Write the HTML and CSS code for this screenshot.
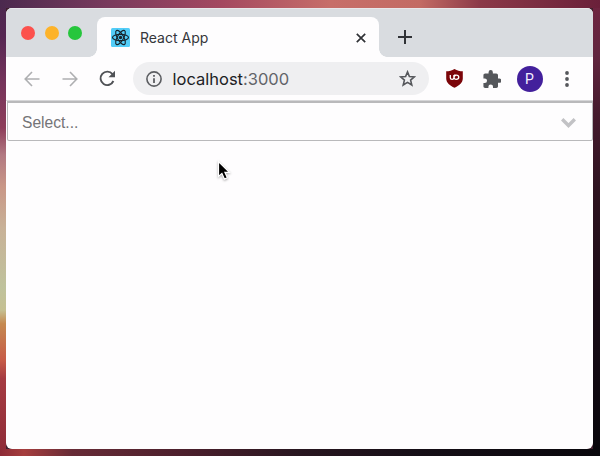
FILE: index.html
```
<!DOCTYPE html>
<html lang="en">
<head>
<meta charset="utf-8">
<title>React App</title>
<link rel="stylesheet" href="styles.css">
</head>
<body>
<div class="desktop">
  <div class="window">
    <div class="tabbar">
      <div class="lights"><i class="light red"></i><i class="light yellow"></i><i class="light green"></i></div>
      <div class="tab">
        <svg class="favicon" viewBox="0 0 19 19"><rect width="19" height="19" rx="1.5" fill="#53cdf8"/><g fill="none" stroke="#17252d" stroke-width="1.15"><ellipse cx="9.5" cy="9.5" rx="8" ry="3.1"/><ellipse cx="9.5" cy="9.5" rx="8" ry="3.1" transform="rotate(60 9.5 9.5)"/><ellipse cx="9.5" cy="9.5" rx="8" ry="3.1" transform="rotate(120 9.5 9.5)"/></g><circle cx="9.5" cy="9.5" r="1.7" fill="#17252d"/></svg>
        <span class="tab-title">React App</span>
        <svg class="close" viewBox="0 0 10 10"><path d="M.8.8l8.4 8.4M9.2.8L.8 9.2" fill="none" stroke="#303236" stroke-width="1.7"/></svg>
      </div>
      <svg class="plus" viewBox="0 0 14 14"><path d="M7 0v14M0 7h14" fill="none" stroke="#303236" stroke-width="2"/></svg>
    </div>
    <div class="toolbar">
      <svg class="arrow" viewBox="0 0 16 16"><path d="M15.5 8H1.5M8 1L1.2 8 8 15" fill="none" stroke="#aeafb1" stroke-width="1.6"/></svg>
      <svg class="arrow forward" viewBox="0 0 16 16"><path d="M.5 8h14M8 1l6.800 7L8 15" fill="none" stroke="#aeafb1" stroke-width="1.6"/></svg>
      <svg class="reload" viewBox="0 0 17 17"><path d="M14.400 11A6.700 6.700 0 1 1 13.500 4.200" fill="none" stroke="#505256" stroke-width="1.900"/><path d="M16 .8v6.400H9.500z" fill="#505256"/></svg>
      <div class="address">
        <svg class="info" viewBox="0 0 16 16"><circle cx="8" cy="8" r="7.100" fill="none" stroke="#5b5d61" stroke-width="1.600"/><path d="M8 7.200V12M8 4v1.800" stroke="#5b5d61" stroke-width="1.800"/></svg>
        <span class="url">localhost<span class="port">:3000</span></span>
        <svg class="star" viewBox="0 0 17 17"><path d="M8.500 1.900l1.900 4.600 5 .4-3.800 3.200 1.200 4.900-4.300-2.600L4.200 15l1.200-4.900L1.600 6.900l5-.4z" fill="none" stroke="#55575b" stroke-width="1.600"/></svg>
      </div>
      <svg class="shield" viewBox="0 0 17 19"><path d="M8.500 0C6 1.700 3 2.300.2 2.300V9.500C.2 14 4 16.500 8.500 18.800 13 16.500 16.800 14 16.800 9.500V2.300C14 2.300 11 1.700 8.500 0z" fill="#7b0509"/><path d="M4.300 6v2.700q0 1.700 1.800 1.700t1.800-1.700V6M8 6.200h2.200c3.400 0 3.400 4.200 0 4.200-2.900 0-2.700-3.600-.4-4.100" fill="none" stroke="#fff" stroke-width="1.300"/></svg>
      <svg class="puzzle" viewBox="1.500 1 21 21"><path fill="#55575b" d="M20.500 11H19V7c0-1.100-.9-2-2-2h-4V3.500a2.500 2.500 0 0 0-5 0V5H4c-1.100 0-2 .9-2 2v3.800h1.500a2.700 2.700 0 0 1 0 5.400H2V20c0 1.100.9 2 2 2h3.800v-1.500a2.700 2.700 0 0 1 5.400 0V22H17c1.100 0 2-.9 2-2v-4h1.500a2.500 2.500 0 0 0 0-5z"/></svg>
      <span class="avatar">P</span>
      <svg class="dots" viewBox="0 0 4 16"><g fill="#55575b"><circle cx="2" cy="2" r="1.900"/><circle cx="2" cy="8" r="1.900"/><circle cx="2" cy="14" r="1.900"/></g></svg>
    </div>
    <div class="page">
      <div class="select">
        <span>Select...</span>
        <svg class="chevron" viewBox="0 0 15 10"><path d="M1.200 1.300L7.500 7.500l6.300-6.200" fill="none" stroke="#c2c2c5" stroke-width="3.400"/></svg>
      </div>
    </div>
  </div>
  <svg class="cursor" viewBox="0 0 14 22"><path d="M1.500 1.500v15l3.400-3.100 2.500 5.700 3-1.300-2.500-5.500h4.500z" fill="#000" stroke="#fff" stroke-width="1.200"/></svg>
</div>
</body>
</html>
```
FILE: styles.css
```
* { box-sizing: border-box; }
body { margin: 0; font-family: Inter, "Liberation Sans", sans-serif; }
svg { display: block; flex: none; }
.desktop {
  position: relative;
  width: 600px;
  height: 456px;
  padding: 8px 7px 7px 6px;
  overflow: hidden;
  background:
    linear-gradient(90deg, #4b294e, #793a5d 18%, #a44860 37%, #c76e69 55%, #c36b64 70%, #8b3948 80%, #6a203a) top / 100% 8px no-repeat,
    linear-gradient(90deg, #8d2b36, #a63e3e 4%, #672b36 12%, #4d202d 30%, #281620 50%, #150e16 70%, #09070c) bottom / 100% 7px no-repeat,
    linear-gradient(#4b294e, #552652 8%, #75345b 18%, #8d3d5a 28%, #b27982 34%, #c99787 41%, #c8b197 50%, #bfc29c 63%, #c5c092 68%, #c58950 71%, #c75b47 79%, #a53b42 83%, #8e2b37) left / 6px 100% no-repeat,
    linear-gradient(#702440, #61253f 12%, #451a2d 25%, #2e1320 42%, #1b0d18 65%, #08060b) right / 7px 100% no-repeat,
    #40202e;
}
.window {
  height: 441px;
  display: flex;
  flex-direction: column;
  border-radius: 6px;
  overflow: hidden;
  background: #fefdfe;
}
.tabbar {
  flex: none;
  height: 49px;
  display: flex;
  background: #d9dce0;
  border-top: 1px solid #e7e8eb;
}
.lights { width: 91px; display: flex; gap: 9.500px; padding: 17px 0 0 15px; }
.light { width: 14px; height: 14px; border-radius: 50%; }
.red { background: #fc514d; }
.yellow { background: #fdb32a; }
.green { background: #26c63c; }
.tab {
  position: relative;
  width: 282px;
  margin-top: 8px;
  padding: 1px 13.500px 0 14px;
  display: flex;
  align-items: center;
  background: #fefdfe;
  border-radius: 8px 8px 0 0;
}
.tab::before, .tab::after {
  content: "";
  position: absolute;
  bottom: 0;
  width: 8px;
  height: 8px;
}
.tab::before { left: -8px; background: radial-gradient(circle at 0 0, transparent 7.500px, #fefdfe 8px); }
.tab::after { right: -8px; background: radial-gradient(circle at 100% 0, transparent 7.500px, #fefdfe 8px); }
.favicon { width: 19px; height: 19px; }
.tab-title { margin-left: 10px; font-size: 14px; line-height: 20px; color: #35373b; }
.close { width: 10px; height: 10px; margin-left: auto; }
.plus { width: 14px; height: 14px; margin: 21px 0 0 19px; }
.toolbar { flex: none; height: 43px; display: flex; align-items: center; padding-left: 18px; }
.arrow { width: 16px; height: 16px; }
.forward { margin-left: 21.500px; }
.reload { width: 17px; height: 17px; margin-left: 21.500px; }
.address {
  width: 295.500px;
  height: 33px;
  margin-left: 17px;
  padding: 0 13px;
  display: flex;
  align-items: center;
  border-radius: 17px;
  background: #efeff1;
}
.info { width: 16px; height: 16px; }
.url { margin-left: 10.500px; font-size: 16.500px; line-height: 24px; color: #202124; }
.port { color: #626469; }
.star { width: 17px; height: 17px; margin-left: auto; }
.shield { width: 17px; height: 19px; margin-left: 17px; }
.puzzle { width: 18px; height: 18px; margin-left: 20px; }
.avatar {
  width: 26px;
  height: 26px;
  margin-left: 16px;
  border-radius: 50%;
  background: #43209c;
  color: #f4efff;
  font: 14px/26px Roboto, sans-serif;
  text-align: center;
}
.dots { width: 4px; height: 16px; margin-left: 22px; }
.page { flex: 1; border-top: 1px solid #d6d6d8; }
.select {
  height: 40px;
  margin: 0 0 0 1px;
  padding: 3px 16px 0 14px;
  display: flex;
  align-items: center;
  justify-content: space-between;
  border: 1px solid #b9b9bb;
  border-top: 2px solid #b9b9bb;
  border-radius: 0 0 2px 2px;
  font: 15.600px/20px "Liberation Sans", sans-serif;
  color: #747477;
}
.chevron { width: 15px; height: 10px; }
.cursor { position: absolute; left: 217px; top: 160px; width: 14px; height: 22px; filter: drop-shadow(0 1px 1px #0005); }
```
